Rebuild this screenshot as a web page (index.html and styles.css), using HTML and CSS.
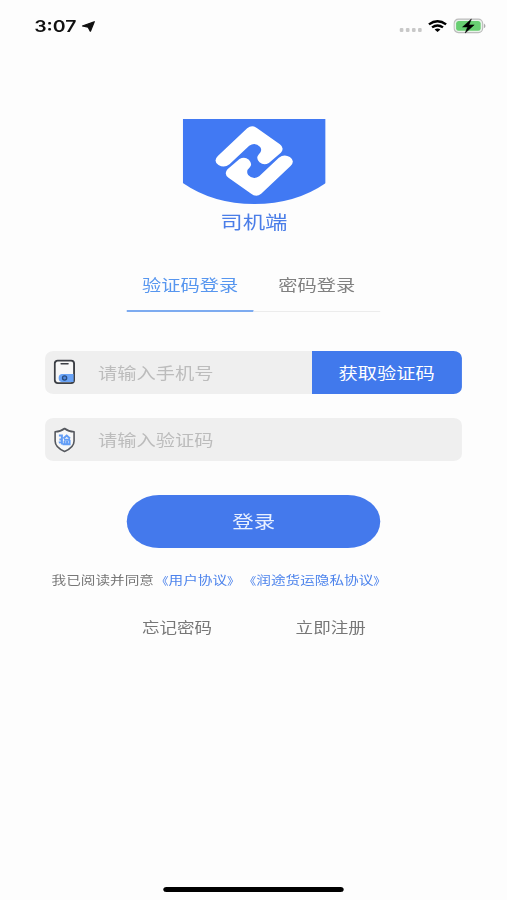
FILE: index.html
```html
<!DOCTYPE html>
<html lang="zh-CN">
<head>
  <meta charset="UTF-8" />
  <meta name="viewport" content="width=device-width, initial-scale=1.0"/>
  <title>司机端</title>
  <link rel="stylesheet" href="styles.css">
</head>
<body>
  <div class="page">
    <header class="status-bar">
      <div class="status-left">
        <span class="time">3:07</span>
        <svg class="location" viewBox="0 0 12 12" preserveAspectRatio="none">
          <path d="M11.3.7 7.8 11.2 5.8 6.7.7 5.4Z" fill="#111" stroke="#111" stroke-width="1.2" stroke-linejoin="round"/>
        </svg>
      </div>
      <div class="status-right">
        <div class="signal"><i></i><i></i><i></i><i></i></div>
        <svg class="wifi" viewBox="0 0 20 13" preserveAspectRatio="none" fill="none" stroke="#000" stroke-width="2.5">
          <path d="M1.2 4.8Q10-2 18.8 4.8M4.4 8Q10 3.8 15.6 8"/>
          <path d="M7 10.3Q10 8.1 13 10.3L10 13Z" fill="#000" stroke="none"/>
        </svg>
        <svg class="battery" viewBox="0 0 34 16" preserveAspectRatio="none">
          <rect x=".7" y="1.2" width="29.6" height="13.4" rx="4.5" fill="#e9f3ea" stroke="#bcbcbc" stroke-width="1.2"/>
          <rect x="2.8" y="3" width="25.4" height="9.8" rx="2.5" fill="#68cf72"/>
          <path d="M31.6 5.6q3.2 2.3 0 4.6z" fill="#aaa"/>
          <path d="M18.6 1 9.5 9h5.2l-2.5 6 9.3-8.1h-5.4z" fill="#000" stroke="#000" stroke-width=".5"/>
        </svg>
      </div>
    </header>

    <div class="brand">
      <svg class="logo" viewBox="0 0 429 255" preserveAspectRatio="none">
        <path d="M0 0H429V192Q338 255 214.5 255T0 192Z" fill="#4179f3"/>
        <g fill="#fff">
          <path id="hook" d="M105 111 193 28Q208 16 223 28L291 76Q306 87 294 101L258 132Q243 141 230 130Q218 117 227 107Q240 96 232 84Q217 68 199 80L140 136Q124 148 107 138Q90 126 105 111Z"/>
          <use href="#hook" transform="rotate(180 214 126)"/>
        </g>
      </svg>
      <h1>司机端</h1>
    </div>

    <nav class="tabs">
      <a class="tab active">验证码登录</a>
      <a class="tab">密码登录</a>
    </nav>

    <form class="login-form">
      <div class="field">
        <svg class="icon" viewBox="0 0 22 26" preserveAspectRatio="none">
          <rect x="1.1" y="1.6" width="19.4" height="22.5" rx="3" fill="#f7f7f7" stroke="#3c3f45" stroke-width="1.9"/>
          <path d="M7.5 4.8h7" stroke="#3c3f45" stroke-width="1.4" stroke-linecap="round"/>
          <path d="M8 15H20V23H8Q5 22.5 5 19T8 15Z" fill="#69a3f7"/>
          <circle cx="11" cy="19" r="2.1" fill="#5289df" stroke="#284b7c" stroke-width="1.3"/>
        </svg>
        <input type="text" placeholder="请输入手机号">
        <button type="button" class="code-btn">获取验证码</button>
      </div>
      <div class="field">
        <svg class="icon" viewBox="0 0 22 26" preserveAspectRatio="none">
          <path d="M11 1.5Q15 4.6 20.5 4.8V14Q20.5 20.5 11 24.4Q1.5 20.5 1.5 14V4.8Q7 4.6 11 1.5Z" fill="#f7f7f7" stroke="#55585e" stroke-width="1.6" stroke-linejoin="round"/>
          <path d="M5.3 8.5h3v4H5.8M5.2 15.5l3.5-.8M8.3 12.5v5M9.8 11.5l3.3-3 3.3 3M10.3 12.7h6.2M11 14v3M13.5 14v3M16 13v4M9 17.3h8" fill="none" stroke="#629df6" stroke-width="2"/>
        </svg>
        <input type="text" placeholder="请输入验证码">
      </div>
      <button type="button" class="login-btn">登录</button>
    </form>

    <p class="agreement">我已阅读并同意<a><span class="open">《</span>用户协议<span class="close">》</span></a><a><span class="open">《</span>润途货运隐私协议<span class="close">》</span></a></p>

    <div class="links">
      <a>忘记密码</a>
      <a>立即注册</a>
    </div>

    <div class="home-bar"></div>
  </div>
</body>
</html>
```
FILE: styles.css
```css
* {
  box-sizing: border-box;
}

body {
  margin: 0;
  background-color: #fdfdfd;
  font-family: "Noto Sans CJK SC", sans-serif;
  overflow: hidden;
}

.page {
  display: flex;
  flex-direction: column;
  width: 416px;
  height: 900px;
  transform: scaleX(1.21875);
  transform-origin: 0 0;
}

.status-bar {
  display: flex;
  justify-content: space-between;
  align-items: center;
  height: 52px;
  padding: 0 17px 0 28px;
}

.status-left, .status-right {
  display: flex;
  align-items: center;
}

.time {
  font-family: Inter, sans-serif;
  font-size: 16px;
  font-weight: 600;
  line-height: 20px;
  color: #111;
}

.location {
  width: 11px;
  height: 11px;
  margin-left: 4px;
}

.signal {
  display: flex;
  gap: 2px;
  margin: 7px 5px 0 0;
}

.signal i {
  width: 3px;
  height: 4px;
  border-radius: 1px;
  background-color: #c8c8c8;
}

.wifi {
  width: 16px;
  height: 12px;
  margin-right: 5px;
}

.battery {
  width: 27px;
  height: 16px;
}

.brand {
  display: flex;
  flex-direction: column;
  align-items: center;
  padding: 67px 0 0 0.6px;
}

.logo {
  width: 117.4px;
  height: 85px;
}

h1 {
  margin: 3px 0 0;
  font-size: 18.4px;
  font-weight: 400;
  line-height: 28px;
  color: #4a7de8;
}

.tabs {
  display: flex;
  width: 208px;
  margin: 24px auto 0;
}

.tab {
  flex: 1;
  height: 53px;
  border-bottom: 1px solid #ececec;
  font-size: 15.8px;
  line-height: 52px;
  text-align: center;
  color: #808080;
}

.tab.active {
  border-bottom: 2px solid #7dabf0;
  color: #5796ef;
}

.login-form {
  display: flex;
  flex-direction: column;
  padding: 38.5px 37px 0 37.3px;
}

.field {
  display: flex;
  align-items: center;
  height: 43px;
  margin-bottom: 24.5px;
  border-radius: 7px;
  background-color: #efefef;
  overflow: hidden;
}

.icon {
  flex: none;
  width: 18px;
  height: 26px;
  margin-left: 7px;
}

.field input {
  flex: 1;
  min-width: 0;
  padding: 0;
  margin-left: 18.2px;
  border: none;
  background: none;
  font-family: inherit;
  font-size: 15.8px;
}

.field input::placeholder {
  color: #bcbcbc;
}

.code-btn {
  width: 123.5px;
  height: 43px;
  padding: 0;
  border: none;
  background-color: #4179ec;
  font-family: inherit;
  font-size: 15.8px;
  color: #fff;
}

.login-btn {
  align-self: center;
  width: 208px;
  height: 53px;
  margin-top: 9px;
  padding: 0 0 2px;
  border: none;
  border-radius: 27px;
  background-color: #4479ec;
  font-family: inherit;
  font-size: 17.6px;
  color: #e8f0ff;
}

.agreement {
  margin: 22px 0 0 42.3px;
  font-size: 12px;
  line-height: 20px;
  color: #777;
  white-space: nowrap;
  text-spacing-trim: space-all;
}

.agreement a {
  color: #4c83ec;
}

/* slightly smaller brackets, tight to the name they enclose */
.open, .close {
  font-size: 10.5px;
}

.open {
  margin-left: 1.5px;
}

.close {
  margin-right: 1.5px;
}

.links {
  display: flex;
  justify-content: center;
  gap: 68.5px;
  margin-top: 24px;
  padding-left: 0.6px;
  font-size: 14.4px;
  line-height: 24px;
  color: #777;
}

.home-bar {
  width: 148.5px;
  height: 5px;
  margin: auto auto 8px;
  border-radius: 3px;
  background-color: #000;
}
```
